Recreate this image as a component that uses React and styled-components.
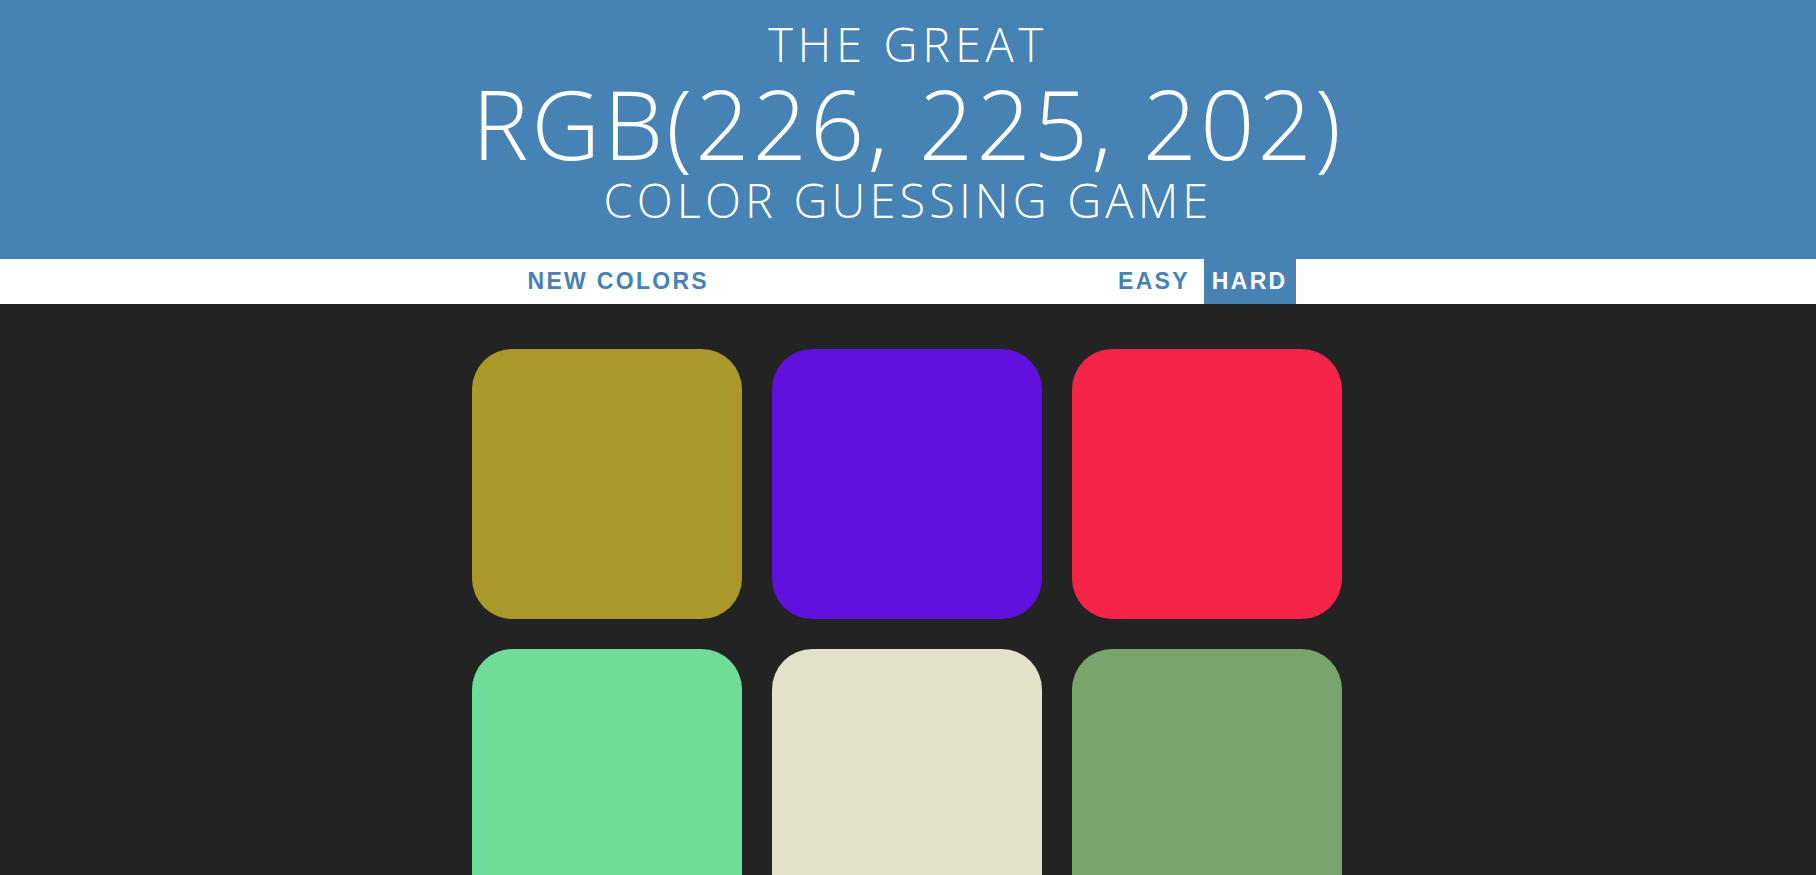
import styled, { createGlobalStyle } from 'styled-components';

const GlobalStyle = createGlobalStyle`
  body {
    margin: 0;
    background: #232323;
    font-family: 'Open Sans', 'Liberation Sans', sans-serif;
  }
`;

const Header = styled.h1`
  margin: 0;
  padding: 19px 0 32px;
  background: #4682b4;
  color: #fff;
  font-weight: 300;
  text-align: center;
  text-transform: uppercase;
`;

const Line = styled.span`
  display: block;
  font-size: ${(p) => (p.$big ? '95px' : '47px')};
  line-height: 1.1;
  letter-spacing: ${(p) => p.$spacing}px;
`;

const Stripe = styled.div`
  height: 45px;
  background: #fff;
  display: flex;
  justify-content: center;
  align-items: stretch;
`;

const NavButton = styled.button`
  border: none;
  outline: none;
  margin: 0;
  padding: 0 9px 0 8px;
  background: ${(p) => (p.$selected ? '#4682b4' : '#fff')};
  color: ${(p) => (p.$selected ? '#fff' : '#4682b4')};
  font-family: 'Liberation Sans', Arial, sans-serif;
  font-size: 23px;
  font-weight: 700;
  letter-spacing: 2.3px;
  text-transform: uppercase;
  cursor: pointer;
`;

const Message = styled.span`
  width: 392px;
`;

const Modes = styled.div`
  display: flex;
  gap: 5px;
`;

const Board = styled.div`
  max-width: 900px;
  margin: 30px auto;
  display: flex;
  flex-wrap: wrap;
  position: relative;
  left: -1px;
`;

const Square = styled.div`
  width: 30%;
  aspect-ratio: 1;
  margin: 1.66%;
  border-radius: 15%;
  background: ${(p) => p.$color};
`;

const colors = [
  'rgb(171, 152, 42)',
  'rgb(98, 16, 222)',
  'rgb(245, 37, 74)',
  'rgb(111, 221, 151)',
  'rgb(226, 225, 202)',
  'rgb(120, 165, 107)',
];

export default function App() {
  return (
    <>
      <GlobalStyle />
      <Header>
        <Line $spacing={4.7}>The Great</Line>
        <Line $big $spacing={3.2}>RGB(226, 225, 202)</Line>
        <Line $spacing={4.1}>Color Guessing Game</Line>
      </Header>
      <Stripe>
        <NavButton>New Colors</NavButton>
        <Message />
        <Modes>
          <NavButton>Easy</NavButton>
          <NavButton $selected>Hard</NavButton>
        </Modes>
      </Stripe>
      <Board>
        {colors.map((c) => (
          <Square key={c} $color={c} />
        ))}
      </Board>
    </>
  );
}
